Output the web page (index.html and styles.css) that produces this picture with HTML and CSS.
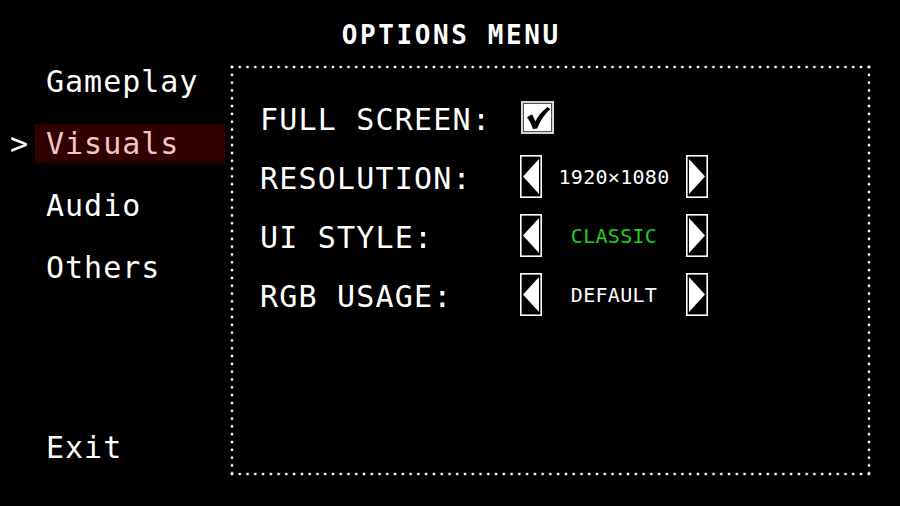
FILE: index.html
```html
<!DOCTYPE html>
<html>
<head>
<meta charset="utf-8">
<title>Options Menu</title>
<link rel="stylesheet" href="styles.css">
</head>
<body>
<div class="screen">
  <h1 class="title">OPTIONS MENU</h1>
  <div class="main">
    <nav class="sidebar">
      <ul class="menu">
        <li class="item"><span class="marker"></span><span class="label">Gameplay</span></li>
        <li class="item active"><span class="marker">&gt;</span><span class="label">Visuals</span></li>
        <li class="item"><span class="marker"></span><span class="label">Audio</span></li>
        <li class="item"><span class="marker"></span><span class="label">Others</span></li>
      </ul>
      <div class="item exit"><span class="marker"></span><span class="label">Exit</span></div>
    </nav>
    <section class="panel">
      <div class="row">
        <span class="opt-label">FULL SCREEN:</span>
        <span class="checkbox"><svg class="check" viewBox="0 0 25 25"><path d="M1 11.8 C2.6 10.2 4.2 9.2 6.2 8.6 L9.4 15.2 C12.6 9.6 16.6 4.6 21.6 1 L24.2 2.9 C18.6 8.2 14.2 14.6 11.2 22.6 L6.9 22.9 C5.6 18.6 3.6 14.6 1 11.8 Z" fill="#000"/></svg></span>
      </div>
      <div class="row">
        <span class="opt-label">RESOLUTION:</span>
        <div class="selector">
          <svg class="arrow" viewBox="0 0 22 43"><rect x="0.8" y="0.8" width="20.4" height="41.4" fill="none" stroke="#fff" stroke-width="1.6"/><polygon points="3,21.5 19,4 19,39" fill="#fff"/></svg>
          <span class="value">1920×1080</span>
          <svg class="arrow" viewBox="0 0 22 43"><rect x="0.8" y="0.8" width="20.4" height="41.4" fill="none" stroke="#fff" stroke-width="1.6"/><polygon points="3,4 3,39 19,21.5" fill="#fff"/></svg>
        </div>
      </div>
      <div class="row">
        <span class="opt-label">UI STYLE:</span>
        <div class="selector">
          <svg class="arrow" viewBox="0 0 22 43"><rect x="0.8" y="0.8" width="20.4" height="41.4" fill="none" stroke="#fff" stroke-width="1.6"/><polygon points="3,21.5 19,4 19,39" fill="#fff"/></svg>
          <span class="value green">CLASSIC</span>
          <svg class="arrow" viewBox="0 0 22 43"><rect x="0.8" y="0.8" width="20.4" height="41.4" fill="none" stroke="#fff" stroke-width="1.6"/><polygon points="3,4 3,39 19,21.5" fill="#fff"/></svg>
        </div>
      </div>
      <div class="row">
        <span class="opt-label">RGB USAGE:</span>
        <div class="selector">
          <svg class="arrow" viewBox="0 0 22 43"><rect x="0.8" y="0.8" width="20.4" height="41.4" fill="none" stroke="#fff" stroke-width="1.6"/><polygon points="3,21.5 19,4 19,39" fill="#fff"/></svg>
          <span class="value">DEFAULT</span>
          <svg class="arrow" viewBox="0 0 22 43"><rect x="0.8" y="0.8" width="20.4" height="41.4" fill="none" stroke="#fff" stroke-width="1.6"/><polygon points="3,4 3,39 19,21.5" fill="#fff"/></svg>
        </div>
      </div>
    </section>
  </div>
</div>
</body>
</html>
```

FILE: styles.css
```css
html, body {
  margin: 0;
  padding: 0;
  background: #000;
}

body {
  font-family: "DejaVu Sans Mono", "Liberation Mono", monospace;
  color: #fff;
}

.screen {
  width: 900px;
  height: 506px;
  overflow: hidden;
}

.title {
  margin: 0;
  padding: 20px 0 0 2.6px;
  height: 30px;
  line-height: 30px;
  font-size: 26px;
  font-weight: bold;
  letter-spacing: 2.6px;
  text-align: center;
}

.main {
  display: flex;
  height: 426px;
}

.sidebar {
  width: 230px;
  flex: none;
  display: flex;
  flex-direction: column;
  padding: 12px 0 9px;
  box-sizing: border-box;
}

.menu {
  list-style: none;
  margin: 0;
  padding: 0;
  display: flex;
  flex-direction: column;
  gap: 23px;
}

.item {
  display: flex;
  height: 39px;
  line-height: 39px;
  font-size: 30px;
  letter-spacing: 1px;
}

.marker {
  width: 35px;
  padding-left: 10px;
  box-sizing: border-box;
}

.label {
  width: 190px;
  padding-left: 11px;
  box-sizing: border-box;
}

.active .label {
  background: #300000;
  color: #f6c3c3;
}

.exit {
  margin-top: auto;
}

.panel {
  flex: none;
  width: 641px;
  height: 411px;
  margin-top: 15px;
  box-sizing: border-box;
  padding: 31px 0 0 30px;
  display: flex;
  flex-direction: column;
  gap: 16px;
  background-image:
    radial-gradient(circle at center, #fff 0, #fff 1.1px, rgba(255,255,255,0) 1.7px),
    radial-gradient(circle at center, #fff 0, #fff 1.1px, rgba(255,255,255,0) 1.7px),
    radial-gradient(circle at center, #fff 0, #fff 1.1px, rgba(255,255,255,0) 1.7px),
    radial-gradient(circle at center, #fff 0, #fff 1.1px, rgba(255,255,255,0) 1.7px);
  background-size: 7.768px 4px, 7.768px 4px, 4px 7.827px, 4px 7.827px;
  background-position: -1.884px 0, -1.884px 100%, 0 -1.913px, 100% -1.913px;
  background-repeat: repeat-x, repeat-x, repeat-y, repeat-y;
}

.row {
  display: flex;
  align-items: center;
  height: 43px;
}

.opt-label {
  width: 260px;
  flex: none;
  padding-top: 4px;
  font-size: 30px;
  letter-spacing: 1.2px;
}

.checkbox {
  margin-left: 1px;
  width: 33px;
  height: 33px;
  box-sizing: border-box;
  border: 2px solid #d4d4d4;
  box-shadow: inset 0 0 0 1px #505050;
  background: #fff;
  display: flex;
  align-items: center;
  justify-content: center;
}

.check {
  display: block;
  width: 25px;
  height: 25px;
  margin: 1px 0 0 1px;
}

.selector {
  display: flex;
  align-items: center;
}

.arrow {
  display: block;
  width: 22px;
  height: 43px;
  flex: none;
}

.value {
  width: 144px;
  text-align: center;
  font-size: 20px;
  letter-spacing: 0.3px;
}

.value.green {
  color: #22cc22;
}
```
